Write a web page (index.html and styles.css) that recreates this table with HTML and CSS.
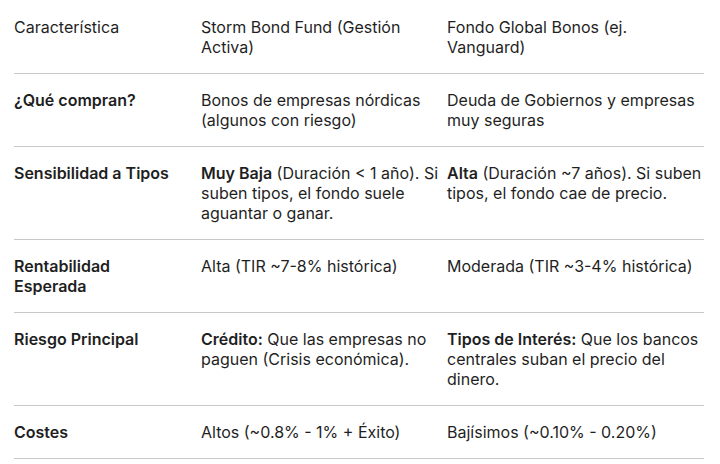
FILE: index.html
```html
<!DOCTYPE html>
<html lang="es">
<head>
<meta charset="utf-8">
<link rel="stylesheet" href="styles.css">
</head>
<body>
<table class="cmp">
  <colgroup>
    <col class="c1"><col class="c2"><col class="c3">
  </colgroup>
  <thead>
    <tr>
      <th>Característica</th>
      <th>Storm Bond Fund (Gestión Activa)</th>
      <th>Fondo Global Bonos (ej. Vanguard)</th>
    </tr>
  </thead>
  <tbody>
    <tr>
      <td><strong>¿Qué compran?</strong></td>
      <td>Bonos de empresas nórdicas (algunos con riesgo)</td>
      <td>Deuda de Gobiernos y empresas muy seguras</td>
    </tr>
    <tr>
      <td><strong>Sensibilidad a Tipos</strong></td>
      <td><strong>Muy Baja</strong> (Duración &lt; 1 año). Si suben tipos, el fondo suele aguantar o ganar.</td>
      <td><strong>Alta</strong> (Duración ~7 años). Si suben tipos, el fondo cae de precio.</td>
    </tr>
    <tr>
      <td><strong>Rentabilidad Esperada</strong></td>
      <td>Alta (TIR ~7-8% histórica)</td>
      <td>Moderada (TIR ~3-4% histórica)</td>
    </tr>
    <tr>
      <td><strong>Riesgo Principal</strong></td>
      <td><strong>Crédito:</strong> Que las empresas no paguen (Crisis económica).</td>
      <td><strong>Tipos de Interés:</strong> Que los bancos centrales suban el precio del dinero.</td>
    </tr>
    <tr>
      <td><strong>Costes</strong></td>
      <td>Altos (~0.8% - 1% + Éxito)</td>
      <td>Bajísimos (~0.10% - 0.20%)</td>
    </tr>
  </tbody>
</table>
</body>
</html>
```
FILE: styles.css
```css
html, body {
  margin: 0;
  padding: 0;
  background: #ffffff;
}
body {
  padding: 1px 0 0 14px;
  font-family: Inter, "Noto Sans", sans-serif;
  font-size: 16px;
  line-height: 20px;
  color: #1f1f1f;
}
.cmp {
  border-collapse: collapse;
  table-layout: fixed;
  width: 690px;
}
.c1 { width: 187px; }
.c2 { width: 246px; }
.c3 { width: 257px; }
.cmp th,
.cmp td {
  text-align: left;
  vertical-align: top;
  font-weight: 400;
  padding: 16px 16px 16px 0;
  border-bottom: 1px solid #c8c8c8;
}
.cmp th:nth-child(2),
.cmp td:nth-child(2) {
  padding-right: 6px;
}
.cmp th:last-child,
.cmp td:last-child {
  padding-right: 0;
}
.cmp strong {
  font-weight: 600;
}
```
